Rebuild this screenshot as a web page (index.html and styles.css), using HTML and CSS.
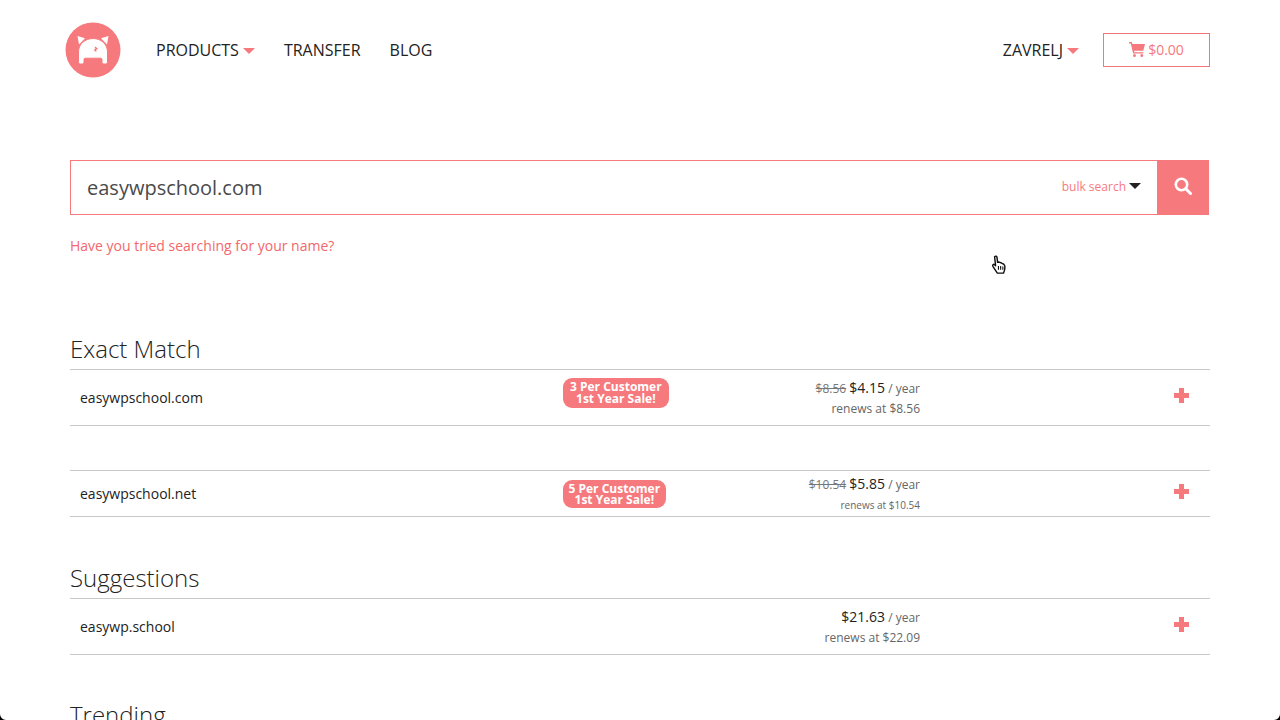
FILE: index.html
```html
<!DOCTYPE html>
<html lang="en">
<head>
<meta charset="utf-8">
<title>Domain search</title>
<link rel="stylesheet" href="styles.css">
</head>
<body>
<div class="page">
  <header class="topbar">
    <svg class="logo" viewBox="0 0 56 56" aria-hidden="true">
      <circle cx="28" cy="28" r="27.5" fill="#f67a7d"/>
      <path fill="#fff" d="M12.500 14l7.500 2.200-6 6.300zM43.500 14l-7.500 2.200 6 6.300z"/>
      <path fill="#fff" stroke="#f67a7d" stroke-width="1" d="M13.500 40V30c0-8 6.500-13.500 14.500-13.500S42.500 22 42.500 30v10c0 1.300-.8 2-2 2h-1.500c-1.200 0-2-.7-2-2v-2.500c0-.8-.5-1.300-1.300-1.300H20.300c-.8 0-1.300.5-1.300 1.300V40c0 1.300-.8 2-2 2h-1.500c-1.200 0-2-.7-2-2z"/>
      <path fill="#f67a7d" d="M30 24.500l3 2-1.800 1.500 .3 1.800-2-.5-.3-2 1.300-.6-.8-.9z"/>
    </svg>
    <nav class="nav-left">
      <a class="nav-link">PRODUCTS<span class="caret"></span></a>
      <a class="nav-link">TRANSFER</a>
      <a class="nav-link">BLOG</a>
    </nav>
    <div class="nav-right">
      <a class="nav-link">ZAVRELJ<span class="caret"></span></a>
      <a class="cart">
        <svg class="cart-icon" viewBox="0 0 16 14" preserveAspectRatio="none" aria-hidden="true"><path fill="#f67a7d" d="M0 0h2.800l.5 1.800H16l-1.700 6.400H5l.3 1.300h9v1.300H4.100L1.800 1.300H0z"/><circle cx="5.500" cy="12.500" r="1.400" fill="#f67a7d"/><circle cx="12.800" cy="12.500" r="1.400" fill="#f67a7d"/></svg>
        $0.00
      </a>
    </div>
  </header>

  <main class="content">
    <form class="search">
      <div class="search-field">
        <span class="search-value">easywpschool.com</span>
        <span class="bulk">bulk search<span class="caret-dark"></span></span>
      </div>
      <div class="search-btn">
        <svg viewBox="0 0 18 18" width="18" height="18" aria-hidden="true"><circle cx="7.500" cy="7.500" r="5.700" fill="none" stroke="#fff" stroke-width="2.600"/><path d="M11.800 11.800l4.700 4.700" stroke="#fff" stroke-width="3" stroke-linecap="round"/></svg>
      </div>
    </form>
    <a class="hint">Have you tried searching for your name?</a>

    <section class="exact">
      <h2 class="section-title">Exact Match</h2>
      <div class="row">
        <span class="domain">easywpschool.com</span>
        <span class="badge">3 Per Customer<br>1st Year Sale!</span>
        <div class="price"><div class="price-line"><s>$8.56</s> <b>$4.15</b> / year</div><div class="renew">renews at $8.56</div></div>
        <span class="plus"></span>
      </div>
      <div class="row row-second">
        <span class="domain">easywpschool.net</span>
        <span class="badge badge-tight">5 Per Customer<br>1st Year Sale!</span>
        <div class="price"><div class="price-line"><s>$10.54</s> <b>$5.85</b> / year</div><div class="renew renew-small">renews at $10.54</div></div>
        <span class="plus"></span>
      </div>
    </section>

    <section class="suggestions">
      <h2 class="section-title">Suggestions</h2>
      <div class="row">
        <span class="domain">easywp.school</span>
        <span class="badge-empty"></span>
        <div class="price"><div class="price-line"><b>$21.63</b> / year</div><div class="renew">renews at $22.09</div></div>
        <span class="plus"></span>
      </div>
    </section>

    <section class="trending">
      <h2 class="section-title">Trending</h2>
    </section>
  </main>

  <svg class="pointer" viewBox="0 0 16 20" aria-hidden="true"><path fill="#fff" stroke="#111" stroke-width="1.300" stroke-linejoin="round" d="M4 1.500c.8-.8 2-.5 2.200.7l.5 4.500 1-.3 1 .3 1 .3 1.100.6 1.600.8c.9.700 1 1.500 1 2.600 0 2-.5 4-1.300 5.500H6.500L2.600 10.500c-.6-1-.3-1.800.4-2 .6-.1 1.200.3 1.900 1.300z"/><path d="M7.500 10v3.500M9.500 10v3.500M11.500 10.500V13.500" stroke="#111" stroke-width="1"/></svg>
  <span class="corner corner-left"></span>
  <span class="corner corner-right"></span>
</div>
</body>
</html>
```

FILE: styles.css
```css
* { box-sizing: border-box; }
html, body { margin: 0; padding: 0; }
body {
  background: #fff;
  font-family: "Open Sans", "Liberation Sans", sans-serif;
  color: #222;
}
.page {
  position: relative;
  width: 1280px;
  height: 720px;
  overflow: hidden;
}
.topbar {
  display: flex;
  align-items: center;
  height: 100px;
  padding: 0 70px 0 65px;
}
.logo { width: 56px; height: 56px; margin-right: 35px; }
.nav-left { display: flex; gap: 29px; }
.nav-right { display: flex; align-items: center; gap: 24px; margin-left: auto; }
.nav-link {
  display: flex;
  align-items: center;
  font-size: 16px;
  line-height: 22px;
  color: #222;
}
.caret {
  width: 0;
  height: 0;
  margin-left: 4px;
  margin-top: 2px;
  border-left: 6px solid transparent;
  border-right: 6px solid transparent;
  border-top: 6px solid #f67a7d;
}
.cart {
  display: flex;
  align-items: center;
  justify-content: center;
  gap: 3px;
  width: 107px;
  height: 34px;
  padding-bottom: 2px;
  border: 1px solid #f0777a;
  font-size: 14px;
  color: #f67a7d;
}
.cart-icon { width: 16px; height: 15px; margin-top: 1px; }
.content { padding: 60px 70px 0; }
.search {
  display: flex;
  height: 55px;
  width: 1139px;
}
.search-field {
  flex: 1;
  display: flex;
  align-items: center;
  justify-content: space-between;
  border: 1px solid #f67a7d;
  border-right: 0;
  padding: 0 16px;
}
.search-value { font-size: 20px; color: #4a4a4a; }
.bulk { display: flex; align-items: center; padding-bottom: 2px; font-size: 12px; color: #f67a7d; }
.caret-dark {
  width: 0;
  height: 0;
  margin-left: 3px;
  margin-top: -2px;
  border-left: 6px solid transparent;
  border-right: 6px solid transparent;
  border-top: 6px solid #222;
}
.search-btn {
  display: flex;
  align-items: center;
  justify-content: center;
  width: 52px;
  padding-bottom: 3px;
  background: #f67a7d;
}
.hint {
  display: block;
  margin-top: 21px;
  font-size: 14px;
  line-height: 20px;
  color: #f2686b;
}
.section-title {
  margin: 0 0 4px;
  font-size: 24px;
  font-weight: 300;
  line-height: 33px;
  color: #222;
}
.exact { margin-top: 76px; }
.suggestions { margin-top: 44px; }
.trending { margin-top: 43px; }
.row {
  display: grid;
  grid-template-columns: 483px 170px 187px 1fr;
  align-items: center;
  height: 57px;
  padding: 0 21px 0 10px;
  border-top: 1px solid #c8c8c8;
  border-bottom: 1px solid #c8c8c8;
}
.row-second { height: 47px; margin-top: 44px; }
.domain { font-size: 14px; color: #222; }
.badge {
  justify-self: start;
  margin-bottom: 9px;
  padding: 3px 7px 3px;
  border-radius: 9px;
  background: #f67a7d;
  color: #fff;
  font-size: 12px;
  font-weight: 700;
  line-height: 12px;
  text-align: center;
}
.badge-tight { margin-bottom: 0; padding: 3px 5.500px; line-height: 11px; }
.price { padding-top: 2px; text-align: right; font-size: 12px; color: #666; }
.price-line { line-height: 20px; }
.price-line b { font-size: 14px; font-weight: 400; color: #222; }
.price-line s { color: #777; }
.renew { line-height: 20px; }
.renew-small { font-size: 10px; }
.plus {
  justify-self: end;
  width: 15px;
  height: 15px;
  margin-bottom: 4px;
  background:
    linear-gradient(#f67a7d, #f67a7d) center / 15px 5px no-repeat,
    linear-gradient(#f67a7d, #f67a7d) center / 5px 15px no-repeat;
}
.pointer {
  position: absolute;
  left: 990px;
  top: 255px;
  width: 18px;
  height: 22px;
}
.corner {
  position: absolute;
  bottom: 0;
  width: 6px;
  height: 6px;
  background: #000;
}
.corner-left { left: 0; clip-path: path("M0 0A6 6 0 0 0 6 6H0z"); }
.corner-right { right: 0; clip-path: path("M6 0A6 6 0 0 1 0 6H6z"); }
```
